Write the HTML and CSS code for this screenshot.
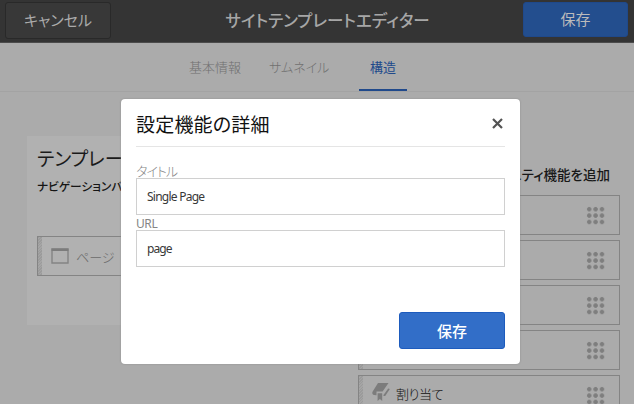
FILE: index.html
```html
<!DOCTYPE html>
<html lang="ja">
<head>
<meta charset="utf-8">
<title>サイトテンプレートエディター</title>
<link rel="stylesheet" href="styles.css">
</head>
<body>
<header class="topbar">
  <button class="btn cancel"><span>キャンセル</span></button>
  <h1>サイトテンプレートエディター</h1>
  <button class="btn top-save"><span>保存</span></button>
</header>
<nav class="tabs">
  <a class="tab info">基本情報</a>
  <a class="tab thumb">サムネイル</a>
  <a class="tab active">構造</a>
</nav>
<main class="content">
  <section class="panel">
    <h2>テンプレート</h2>
    <p>ナビゲーションバー</p>
    <div class="item page">
      <svg class="page-icon" width="18" height="16" viewBox="0 0 18 16"><path d="M1 1h16v14H1z" fill="none" stroke="#848484" stroke-width="1.4"/><path d="M.5.5h17V3H.5z" fill="#7c7c7c"/></svg>
      <span>ページ</span>
    </div>
  </section>
  <section class="features">
    <h3>コミュニティ機能を追加</h3>
    <div class="item"><i class="grip"></i></div>
    <div class="item"><i class="grip"></i></div>
    <div class="item"><i class="grip"></i></div>
    <div class="item"><i class="grip"></i></div>
    <div class="item">
      <svg class="book-icon" width="18" height="18" viewBox="0 0 18 18" fill="#7c7c7c"><path d="M6 0h10.500L10.600 8.500H4.500v3.800C1 12.500-.5 11 .7 8.500z"/><path d="M5.600 10.200h4.600V18l-2.300-2-2.300 2z"/><path d="M16.200 5.500 17.800 6l-4.600 7h-1.700v-1z"/></svg>
      <span>割り当て</span><i class="grip"></i>
    </div>
  </section>
</main>
<div class="overlay">
  <form class="dialog">
    <div class="dialog-head">
      <h2>設定機能の詳細</h2>
      <svg width="11" height="11" viewBox="0 0 11 11"><path d="M1 1l9 9M10 1l-9 9" stroke="#535353" stroke-width="2.200"/></svg>
    </div>
    <label class="label-title">タイトル</label>
    <div class="field">Single Page</div>
    <label class="label-url">URL</label>
    <div class="field slug">page</div>
    <button type="button" class="btn save"><span>保存</span></button>
  </form>
</div>
</body>
</html>
```
FILE: styles.css
```css
* { box-sizing: border-box; }
body {
  margin: 0;
  width: 634px;
  height: 404px;
  overflow: hidden;
  background: #ababab;
  font-family: "Noto Sans CJK JP", sans-serif;
  font-feature-settings: "palt";
  white-space: nowrap;
}
h1, h2, h3, p { margin: 0; }
.btn {
  display: flex;
  align-items: center;
  justify-content: center;
  padding: 0;
  border: 1px solid;
  border-radius: 3px;
  font: 15px/20px "Noto Sans CJK JP", sans-serif;
  font-feature-settings: "palt";
}
.topbar {
  display: grid;
  grid-template-columns: 106px 1fr 105px;
  height: 43px;
  padding: 2px 6px 4px 5px;
  background: #343434;
  border-bottom: 1px solid #4c4c4c;
}
.cancel { height: 37px; padding-bottom: 2px; background: #383838; border-color: #292929; color: #aaa; }
.topbar h1 {
  padding-top: 5px;
  padding-left: 21px;
  text-align: center;
  font-size: 16.5px;
  line-height: 26px;
  font-weight: 500;
  color: #a6a6a6;
}
.top-save { height: 35px; padding-bottom: 2px; background: #234e8e; border-color: #1f498b; color: #bbb; }
.tabs {
  display: flex;
  height: 49px;
  padding-left: 189px;
  border-bottom: 1px solid #a3a3a3;
  font-size: 13px;
  line-height: 48px;
  color: #707070;
  font-weight: 300;
}
.info { width: 80px; }
.thumb { width: 90px; }
.active {
  width: 48px;
  height: 48px;
  text-align: center;
  color: #20498b;
  border-bottom: 2px solid #20498b;
  font-weight: 400;
}
.content { display: flex; padding: 44px 0 0 27px; }
.panel { width: 300px; height: 189px; padding: 9px 10px; background: #b1b1b1; }
.panel h2 { font-size: 19px; line-height: 26px; font-weight: 400; color: #1a1a1a; }
.panel p { margin: 6px 0 41px; font-size: 11.7px; line-height: 18px; font-weight: 500; color: #151515; }
.item {
  display: flex;
  align-items: center;
  height: 40px;
  margin-bottom: 5px;
  border: 1px solid #848484;
  background: repeating-linear-gradient(135deg, #9b9b9b 0 1px, #a5a5a5 1px 2px) no-repeat 0 0 / 4px 100%;
  font-size: 13px;
  font-weight: 300;
  color: #111;
}
.page { color: #6c6c6c; margin: 0; }
.page-icon { margin: 0 7px 0 13px; }
.features { width: 262px; margin-left: 31px; padding-top: 28px; }
.features h3 { margin-bottom: 9px; padding-right: 10px; text-align: right; font-size: 13.5px; line-height: 20px; padding-bottom: 2px; font-weight: 500; color: #181818; }
.book-icon { margin: -6px 6px 0 13px; }
.book-icon + span { margin-top: -3px; letter-spacing: -0.4px; }
.grip {
  width: 19px;
  height: 19px;
  margin: 0 14px 0 auto;
  background: radial-gradient(circle, #7e7e7e 1.9px, transparent 2.500px) 0 0 / 6.400px 6.400px;
}
.overlay { position: absolute; inset: 0; padding: 99px 0 0 121px; }
.dialog {
  display: flex;
  flex-direction: column;
  width: 399px;
  height: 265px;
  padding: 9px 15px 15px;
  background: #fff;
  border-radius: 4px;
  box-shadow: 0 0 2px #888;
}
.dialog-head {
  display: flex;
  justify-content: space-between;
  align-items: center;
  height: 39px;
  padding-right: 2px;
  border-bottom: 1px solid #e5e5e5;
}
.dialog-head svg { margin-bottom: 7px; }
.dialog-head h2 { margin-bottom: 6px; font-size: 19px; letter-spacing: 0.2px; line-height: 30px; font-weight: 400; color: #111; }
.dialog label { color: #858585; font-size: 13px; font-weight: 300; line-height: 15px; }
.dialog .label-title { margin: 16px 0 0; letter-spacing: -1px; }
.dialog .label-url { height: 15px; font: 12px/17px "Noto Sans", sans-serif; letter-spacing: -0.4px; }
.field {
  height: 37px;
  padding-left: 10px;
  border: 1px solid #d0d0d0;
  color: #383838;
  font: 12px/36px "Noto Sans", sans-serif;
  letter-spacing: -0.75px;
}
.slug { letter-spacing: -0.9px; }
.save { width: 106px; height: 37px; margin: auto 0 0 auto; background: #326ec8; border-color: #1d5bbd; color: #fff; font-weight: 500; }
```
